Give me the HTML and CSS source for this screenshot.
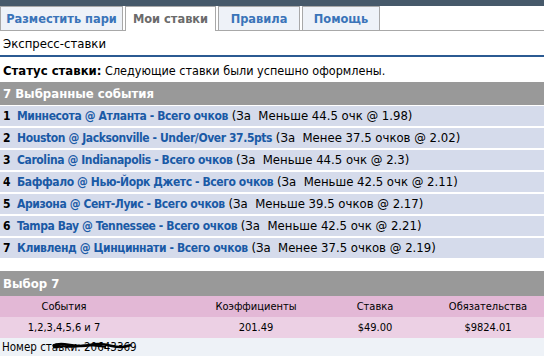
FILE: index.html
```html
<!DOCTYPE html>
<html lang="ru">
  <head>
    <meta charset="UTF-8" />
    <title>Мои ставки</title>
    <link rel="stylesheet" href="styles.css">
  </head>
  <body>
    <div class="topbar"></div>

    <!-- Tabs -->
    <div class="tabs">
      <a class="tab tab-place">Разместить пари</a>
      <a class="tab tab-mine active">Мои ставки</a>
      <a class="tab tab-rules">Правила</a>
      <a class="tab tab-help">Помощь</a>
    </div>

    <div class="page-title">Экспресс-ставки</div>

    <div class="status"><b>Статус ставки:</b> Следующие ставки были успешно оформлены.</div>

    <!-- Selected events -->
    <div class="section-head">7 Выбранные события</div>
    <div class="events">
      <div class="event"><span class="num">1</span><a>Миннесота @ Атланта - Всего очков</a> (За&nbsp; Меньше 44.5 очк @ 1.98)</div>
      <div class="event"><span class="num">2</span><a>Houston @ Jacksonville - Under/Over 37.5pts</a> (За&nbsp; Менее 37.5 очков @ 2.02)</div>
      <div class="event"><span class="num">3</span><a>Carolina @ Indianapolis - Всего очков</a> (За&nbsp; Меньше 44.5 очк @ 2.3)</div>
      <div class="event"><span class="num">4</span><a>Баффало @ Нью-Йорк Джетс - Всего очков</a> (За&nbsp; Меньше 42.5 очк @ 2.11)</div>
      <div class="event"><span class="num">5</span><a>Аризона @ Сент-Луис - Всего очков</a> (За&nbsp; Меньше 39.5 очков @ 2.17)</div>
      <div class="event"><span class="num">6</span><a>Tampa Bay @ Tennessee - Всего очков</a> (За&nbsp; Меньше 42.5 очк @ 2.21)</div>
      <div class="event"><span class="num">7</span><a>Кливленд @ Цинциннати - Всего очков</a> (За&nbsp; Менее 37.5 очков @ 2.19)</div>
    </div>

    <!-- Summary -->
    <div class="section-head summary-head">Выбор 7</div>
    <div class="summary">
      <div class="cell head c1">События</div>
      <div class="cell head c2">Коэффициенты</div>
      <div class="cell head c3">Ставка</div>
      <div class="cell head c4">Обязательства</div>
      <div class="cell c1">1,2,3,4,5,6 и 7</div>
      <div class="cell c2">201.49</div>
      <div class="cell c3">$49.00</div>
      <div class="cell c4">$9824.01</div>
    </div>

    <div class="footer">
      Номер ставки: 20643369
      <svg class="scribble" width="80" height="10" viewBox="0 0 80 10">
        <path d="M1 5 C6 2 12 3 18 4 S30 6 38 4 S52 3 60 5 S72 6 79 4" stroke="#000" stroke-width="2.5" fill="none" />
        <path d="M2 6 C10 4 18 7 28 5 S44 5 54 6" stroke="#000" stroke-width="2" fill="none" />
        <ellipse cx="4" cy="5" rx="3.5" ry="2.5" fill="#000" />
      </svg>
    </div>
  </body>
</html>
```

FILE: styles.css
```css
body {
  margin: 0;
  font-family: "DejaVu Sans Condensed", "DejaVu Sans", sans-serif;
  font-size: 12px;
  color: #000;
  background: #fff;
}

/* Dark strip on top */
.topbar {
  height: 6px;
  background-color: #46596a;
}

/* Tabs */
.tabs {
  display: flex;
  gap: 2px;
  border-bottom: 1px solid #a8a8a8;
  height: 24px;
}

.tab {
  display: block;
  box-sizing: border-box;
  padding-top: 4px;
  text-align: center;
  border: 1px solid #a8a8a8;
  border-bottom: none;
  background-color: #eef2f8;
  color: #3a74b9;
  font-weight: bold;
  font-size: 12.7px;
}

.tab-place { width: 123px; }
.tab-mine  { width: 91px; }
.tab-rules { width: 82px; }
.tab-help  { width: 78px; }

.tab.active {
  background-color: #fff;
  color: #6b6b6b;
  height: 25px;
  margin-bottom: -1px;
}

/* Page title */
.page-title {
  padding: 5px 3px 4px;
  font-size: 13px;
  border-bottom: 2px solid #2b5a92;
}

.status {
  padding: 6px 3px 4px;
  font-size: 12.5px;
}

.status b {
  font-size: 13px;
}

/* Grey section bars */
.section-head {
  background-color: #999;
  color: #fff;
  font-weight: bold;
  font-size: 13px;
  height: 23px;
  line-height: 23px;
  padding-left: 3px;
}

.events {
  display: flex;
  flex-direction: column;
  gap: 2px;
  padding-top: 1px;
}

.event {
  background-color: #d5dbeb;
  height: 20px;
  line-height: 20px;
  padding-left: 3px;
  white-space: nowrap;
  font-size: 13px;
}

.event .num {
  display: inline-block;
  width: 14px;
  font-weight: bold;
  font-size: 12px;
}

.event a {
  color: #1a5aa6;
  font-weight: bold;
  font-size: 12px;
  letter-spacing: -0.4px;
}

.summary-head {
  margin-top: 13px;
  height: 25px;
  line-height: 25px;
}

/* Summary grid */
.summary {
  display: grid;
  grid-template-columns: 128px 202px 90px 1fr;
  font-size: 11px;
}

.cell {
  height: 21px;
  line-height: 21px;
  text-align: center;
  background-color: #ecd0e4;
}

.cell.head {
  background-color: #e3b8d6;
}

.c2 {
  padding-left: 54px;
}

.c4 {
  padding-left: 12px;
}

.footer {
  position: relative;
  background-color: #eef2f7;
  height: 18px;
  line-height: 18px;
  padding-left: 2px;
  font-size: 11.5px;
}

.scribble {
  position: absolute;
  left: 52px;
  top: 3px;
}
```
